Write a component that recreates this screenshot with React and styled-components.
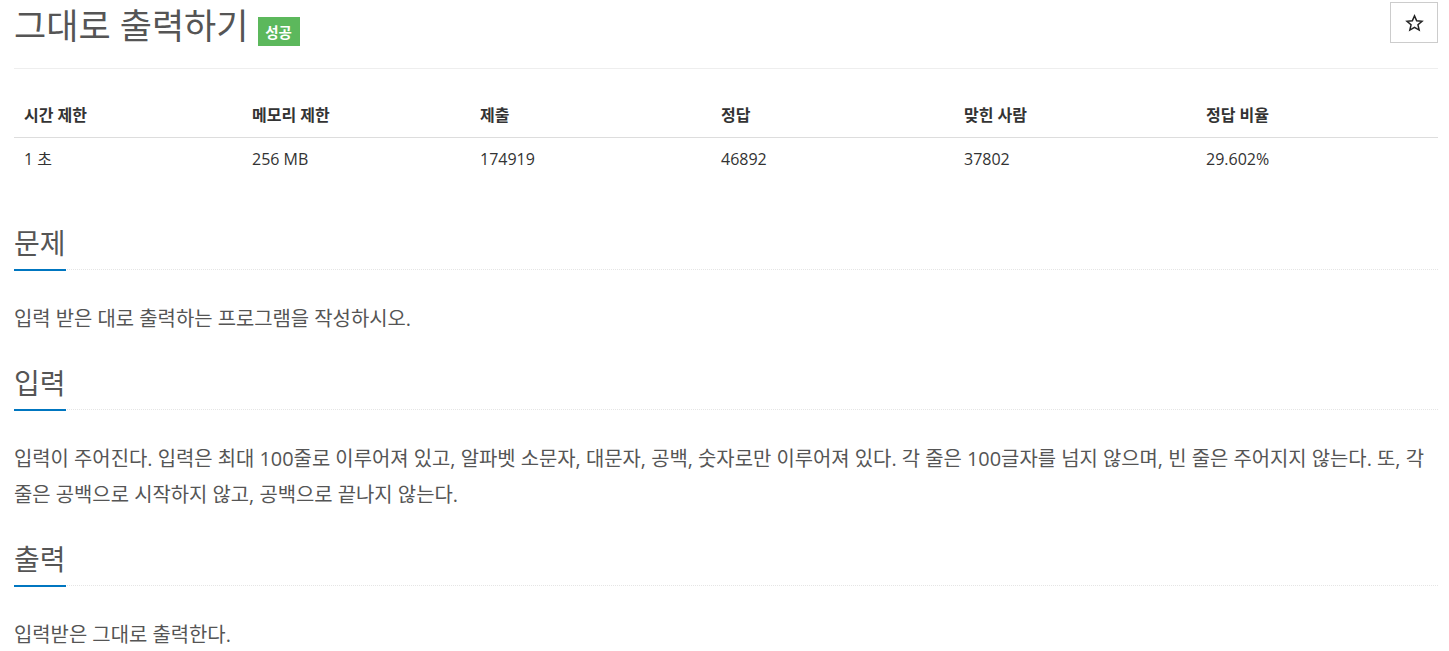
import React from 'react'
import styled, { createGlobalStyle } from 'styled-components'

const GlobalStyle = createGlobalStyle`
   body {
      margin: 0;
      background: #fff;
      font-family: 'Open Sans', 'Noto Sans CJK KR', sans-serif;
      color: #555;
   }
`

const Page = styled.div`
   padding: 0 11px 0 14px;
`

const TitleRow = styled.div`
   display: flex;
   align-items: flex-start;
   height: 69px;
   border-bottom: 1px solid #eee;
   box-sizing: border-box;
`

const Title = styled.h1`
   margin: 7px 0 0 0;
   font-size: 35px;
   font-weight: 400;
   line-height: 38px;
   color: #555;
`

const Badge = styled.span`
   display: inline-flex;
   align-items: center;
   justify-content: center;
   margin: 17px 0 0 9px;
   width: 42px;
   height: 29px;
   background: #5cb85c;
   color: #fff;
   font-size: 14.5px;
   font-weight: 700;
`

const StarButton = styled.button`
   display: flex;
   align-items: center;
   justify-content: center;
   margin: 2px 0 0 auto;
   width: 48px;
   height: 41px;
   background: #fff;
   border: 1px solid #ccc;
   cursor: pointer;
   padding: 0;
`

const Table = styled.table`
   width: 100%;
   margin-top: 29px;
   border-collapse: collapse;
   table-layout: fixed;
   font-size: 16px;
   color: #333;
`

const Th = styled.th`
   box-sizing: border-box;
   width: ${(p) => p.w}px;
   text-align: left;
   font-weight: 700;
   padding: 8px 10px 12px;
   line-height: 19px;
   border-bottom: 1px solid #ddd;
`

const Td = styled.td`
   padding: 12px 10px 8px;
   line-height: 19px;
`

const Section = styled.section`
   margin-top: ${(p) => (p.first ? 51 : 31)}px;
`

const Headline = styled.div`
   display: flex;
   border-bottom: 1px dotted #e5e5e5;
`

const HeadText = styled.h2`
   margin: 0 0 -2px 0;
   font-size: 28px;
   font-weight: 400;
   line-height: 30px;
   padding-bottom: 11px;
   border-bottom: 2px solid #0076c0;
   color: #555;
`

const Text = styled.p`
   margin: 31px 0 0 0;
   font-size: 19.9px;
   line-height: 36px;
   color: #555;
`

const Star = () => (
   <svg width='19' height='18' viewBox='0 0 24 24'>
      <path
         d='M12 2.5l2.9 6.6 7.1.6-5.4 4.7 1.6 7-6.2-3.7-6.2 3.7 1.6-7L2 9.7l7.1-.6z'
         fill='none'
         stroke='#222'
         strokeWidth='2'
         strokeLinejoin='miter'
      />
   </svg>
)

const columns = [
   ['시간 제한', '1 초', 228],
   ['메모리 제한', '256 MB', 228],
   ['제출', '174919', 241],
   ['정답', '46892', 243],
   ['맞힌 사람', '37802', 242],
   ['정답 비율', '29.602%', 242],
]

const sections = [
   ['문제', '입력 받은 대로 출력하는 프로그램을 작성하시오.'],
   [
      '입력',
      '입력이 주어진다. 입력은 최대 100줄로 이루어져 있고, 알파벳 소문자, 대문자, 공백, 숫자로만 이루어져 있다. 각 줄은 100글자를 넘지 않으며, 빈 줄은 주어지지 않는다. 또, 각 줄은 공백으로 시작하지 않고, 공백으로 끝나지 않는다.',
   ],
   ['출력', '입력받은 그대로 출력한다.'],
]

const App = () => {
   return (
      <Page>
         <GlobalStyle />
         <TitleRow>
            <Title>그대로 출력하기</Title>
            <Badge>성공</Badge>
            <StarButton>
               <Star />
            </StarButton>
         </TitleRow>
         <Table>
            <thead>
               <tr>
                  {columns.map(([h, , w]) => (
                     <Th key={h} w={w}>{h}</Th>
                  ))}
               </tr>
            </thead>
            <tbody>
               <tr>
                  {columns.map(([h, v]) => (
                     <Td key={h}>{v}</Td>
                  ))}
               </tr>
            </tbody>
         </Table>
         {sections.map(([head, body], i) => (
            <Section key={head} first={i === 0}>
               <Headline>
                  <HeadText>{head}</HeadText>
               </Headline>
               <Text>{body}</Text>
            </Section>
         ))}
      </Page>
   )
}

export default App
